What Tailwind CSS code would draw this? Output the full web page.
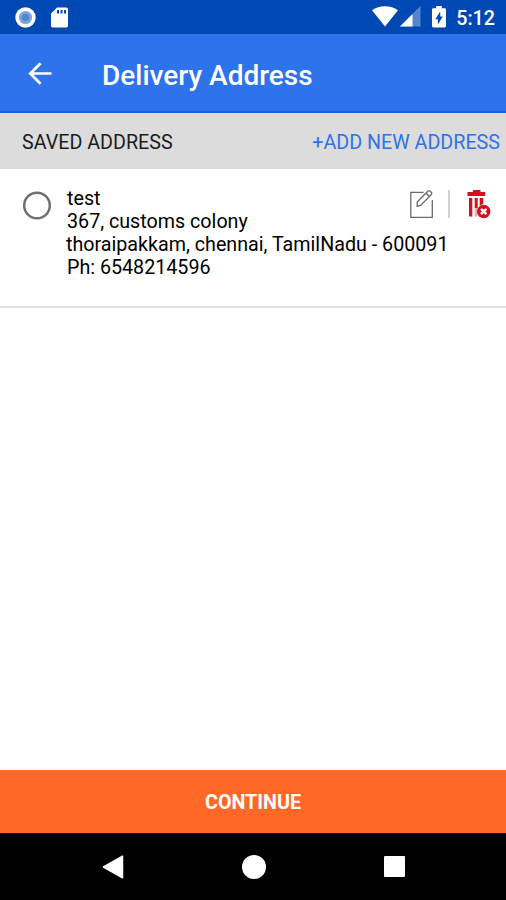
<!DOCTYPE html>
<html lang="en">
<head>
    <meta charset="UTF-8">
    <meta name="viewport" content="width=device-width, initial-scale=1.0">
    <title>Delivery Address</title>
    <script src="https://cdn.jsdelivr.net/npm/@tailwindcss/browser@4"></script>
</head>
<body class="bg-white font-['Roboto',sans-serif] text-black">
    <div class="flex flex-col w-full h-[900px] overflow-hidden">
        <!-- Status bar -->
        <div class="h-[34px] shrink-0 bg-[#0049b5] text-white flex items-center justify-between pl-[15px] pr-[11px]">
            <div class="flex items-center gap-[15px]">
                <svg class="w-[21px] h-[21px]" viewBox="0 0 21 21">
                    <circle cx="10.5" cy="10.5" r="10.2" fill="#fff"/>
                    <circle cx="10.5" cy="10.5" r="6.6" fill="#80a5da"/>
                    <circle cx="10.5" cy="10.5" r="3.8" fill="#5586cd"/>
                </svg>
                <svg class="w-[17px] h-[21px]" viewBox="0 0 17 21">
                    <path fill="#fff" d="M6 .5h9.300q1.700 0 1.700 1.700v16.600q0 1.700-1.700 1.700H1.700Q0 20.500 0 18.800V6.500z"/>
                    <path fill="#0049b5" d="M6 3h2v3.500H6zM9.500 3h2v3.500h-2zM13 3h2v3.500h-2z"/>
                </svg>
            </div>
            <div class="flex items-center">
                <svg class="w-[26px] h-[21px]" viewBox="0 0 26 21">
                    <path fill="#fff" d="M13 20.500L0 4.200Q5.500.2 13 .2T26 4.200z"/>
                </svg>
                <svg class="w-[21px] h-[21px] ml-[2px]" viewBox="0 0 21 21">
                    <path fill="#5586cd" d="M20.500 0v20.500H0z"/>
                    <path fill="#fff" d="M12.500 8v12.500H0z"/>
                </svg>
                <svg class="w-[14px] h-[22px] ml-[11px]" viewBox="0 0 14 22">
                    <path fill="#fff" d="M4.200 0h5.600v2.200h2.800q1.400 0 1.400 1.400v16.500q0 1.400-1.400 1.400H1.400Q0 21.500 0 20.100V3.600q0-1.400 1.400-1.400h2.800z"/>
                    <path fill="#0049b5" d="M8.200 5.500v5h2.600L5.900 18.500v-5.300H3.300z"/>
                </svg>
                <span class="ml-[10px] mt-[3px] text-[19.7px] leading-none font-medium">5:12</span>
            </div>
        </div>

        <!-- App bar -->
        <header class="h-[79px] shrink-0 bg-[#2e73eb] border-b-2 border-[#1a66e2] text-white flex items-center pl-[28px]">
            <svg class="w-[24px] h-[24px]" viewBox="0 0 24 24" fill="none" stroke="#fff" stroke-width="2.7">
                <path d="M23.500 12.500H2.500M12.500 2.300L2.300 12.500L12.500 22.700"/>
            </svg>
            <h1 class="ml-[50px] mt-[6px] text-[28px] leading-none font-medium whitespace-nowrap">Delivery Address</h1>
        </header>

        <!-- Section heading -->
        <div class="h-[56px] shrink-0 bg-[#dcdcdc] flex items-center justify-between pt-[3px] pl-[22px] pr-[6px] text-[19.7px]">
            <span class="text-[#1c1c1c]">SAVED ADDRESS</span>
            <a href="#" class="text-[#2e73eb]">+ADD NEW ADDRESS</a>
        </div>

        <!-- Address -->
        <main class="flex-1">
            <div class="h-[139px] border-b-2 border-[#dcdcdc] flex items-start pl-[22px] pr-[15px]">
                <svg class="mt-[22px] ml-px w-[28px] h-[29px] shrink-0" viewBox="0 0 28 29">
                    <circle cx="14" cy="14.5" r="12.8" fill="none" stroke="#707070" stroke-width="2.5"/>
                </svg>
                <div class="ml-[16px] mt-[18px] flex-1 min-w-0 text-[19.7px] leading-[23px] whitespace-nowrap">
                    <p>test</p>
                    <p>367, customs colony</p>
                    <p class="-ml-px">thoraipakkam, chennai, TamilNadu - 600091</p>
                    <p>Ph: 6548214596</p>
                </div>
                <div class="mt-[20px] shrink-0 flex items-center">
                    <svg class="w-[25px] h-[30px]" viewBox="0 0 25 30" fill="none" stroke="#6b6b6b" stroke-width="1.3">
                        <path d="M14.500 3.300H1.800v25h21.500V11"/>
                        <path d="M8.200 17.400V13L18.800 2.300q1.200-1.200 2.400 0l1 1q1.200 1.200 0 2.400L11.800 16.200zM17 4.200l3.500 3.500"/>
                    </svg>
                    <div class="ml-[14px] w-[2px] h-[28px] bg-[#d2d2d2]"></div>
                    <svg class="w-[24px] h-[30px] ml-[17px]" viewBox="0 0 24 30">
                        <g fill="#d0121b">
                            <path d="M6 1h7.500v2h4.700v4H.5V3H6zM2 9h3.300v18.500H2zM7.700 9h3v10h-3zM12.700 9h3.600v5.500l-3.600 2.500z"/>
                            <path d="M7.700 19h3v8.500h-3z" opacity=".35"/>
                            <circle cx="16.700" cy="22.500" r="6.700"/>
                        </g>
                        <path stroke="#fff" stroke-width="2.400" d="M14 19.800l5.400 5.400M19.400 19.800l-5.400 5.400"/>
                    </svg>
                </div>
            </div>
        </main>

        <button class="h-[63px] shrink-0 bg-[#ff6826] text-white text-[19.7px] font-bold pt-[2px]">CONTINUE</button>

        <!-- Navigation bar -->
        <nav class="h-[67px] shrink-0 bg-black flex items-center justify-between pl-[102px] pr-[101px]">
            <svg class="w-[22px] h-[24px]" viewBox="0 0 22 24">
                <path fill="#fff" stroke="#fff" stroke-width="1.5" stroke-linejoin="round" d="M20.500 1.200v21.600L1.500 12z"/>
            </svg>
            <div class="size-[24px] rounded-full bg-white"></div>
            <div class="size-[21px] rounded-[1px] bg-white"></div>
        </nav>
    </div>
</body>
</html>
